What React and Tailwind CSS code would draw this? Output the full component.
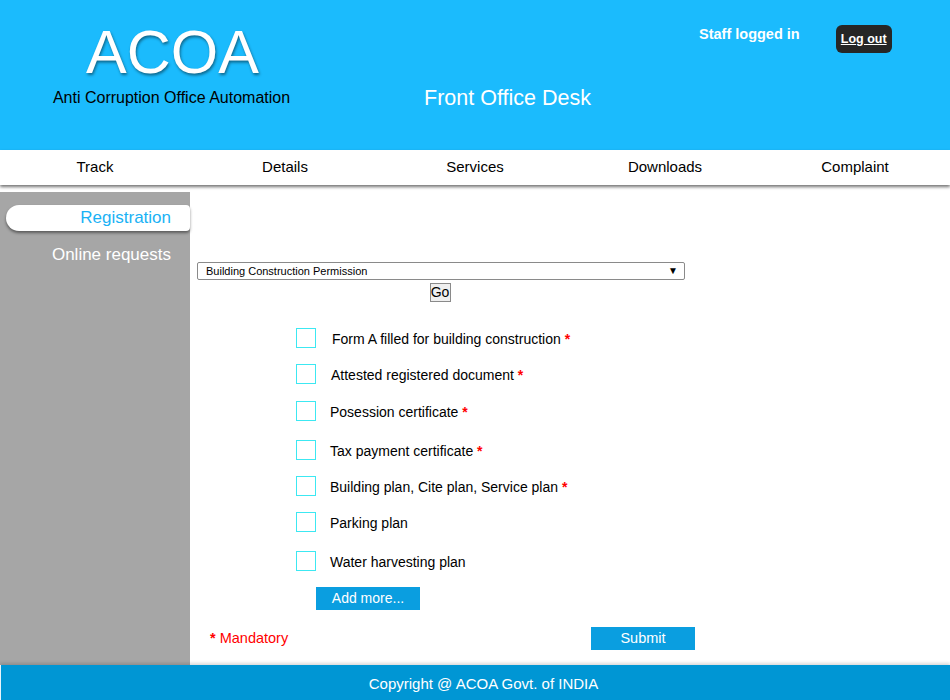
const NAV = ["Track", "Details", "Services", "Downloads", "Complaint"];

const DOCS = [
  { label: "Form A filled for building construction", req: true, top: "mt-[26px]", pl: "pl-[16px]" },
  { label: "Attested registered document", req: true, top: "mt-[16px]", pl: "pl-[15px]" },
  { label: "Posession certificate", req: true, top: "mt-[17px]", pl: "pl-[14px]" },
  { label: "Tax payment certificate", req: true, top: "mt-[19px]", pl: "pl-[14px]" },
  { label: "Building plan, Cite plan, Service plan", req: true, top: "mt-[16px]", pl: "pl-[14px]" },
  { label: "Parking plan", req: false, top: "mt-[16px]", pl: "pl-[14px]" },
  { label: "Water harvesting plan", req: false, top: "mt-[19px]", pl: "pl-[14px]" },
];

const App = () => {
  return (
    <div className="w-[950px] h-[700px] bg-white overflow-hidden font-['Liberation_Sans',Arial,sans-serif]">
      {/* Header */}
      <div className="h-[150px] bg-[#1bbbfd] flex">
        <div className="w-[345px] flex flex-col items-center pt-[17px]">
          <div className="text-white text-[61px] leading-[70px] [text-shadow:1px_2px_3px_rgba(0,0,0,0.45)]">
            ACOA
          </div>
          <div className="text-black text-[16px] leading-[20px] mt-[1px] ml-[-2px]">
            Anti Corruption Office Automation
          </div>
        </div>
        <div className="w-[325px] flex justify-center pt-[85px]">
          <div className="text-white text-[21.5px] leading-[26px]">Front Office Desk</div>
        </div>
        <div className="flex-1 flex items-start pt-[25px]">
          <div className="text-white text-[14.5px] font-bold leading-[20px] mt-[-1px] ml-[29px]">
            Staff logged in
          </div>
          <button className="ml-[36px] h-[28px] w-[56px] rounded-[6px] bg-[#262626] text-white text-[12.5px] font-bold underline leading-[28px] text-center">
            Log out
          </button>
        </div>
      </div>

      {/* Nav */}
      <div className="h-[35px] bg-white grid grid-cols-5 shadow-[0_2px_3px_rgba(0,0,0,0.55)] relative">
        {NAV.map((n) => (
          <div key={n} className="text-center text-[15px] leading-[33px] text-black">
            {n}
          </div>
        ))}
      </div>

      {/* Body */}
      <div className="flex mt-[7px] h-[473px]">
        <div className="w-[190px] bg-[#a6a6a6] pt-[13px]">
          <div className="ml-[6px] h-[26px] bg-white rounded-l-[13px] rounded-r-[4px] shadow-[0_2px_3px_rgba(0,0,0,0.45)] flex items-center justify-end pr-[19px]">
            <span className="text-[#1ab2f5] text-[17px] leading-[26px]">Registration</span>
          </div>
          <div className="mt-[13px] text-right pr-[19px] text-white text-[17px] leading-[22px]">
            Online requests
          </div>
        </div>

        <div className="flex-1 pl-[7px] pt-[70px] relative">
          <div className="w-[488px] h-[18px] border border-[#8a8a8a] rounded-[2px] bg-white flex items-center justify-between pl-[8px] pr-[6px]">
            <span className="text-[11px] text-black leading-[14px]">Building Construction Permission</span>
            <span className="text-[10px] text-black leading-[14px]">▼</span>
          </div>
          <div className="w-[488px] flex justify-center mt-[3px]">
            <button className="h-[19px] w-[21px] border border-[#8a8a8a] bg-[#efefef] text-[14px] leading-[17px] text-black text-center ml-[-2px]">
              Go
            </button>
          </div>

          <div className="pl-[99px]">
            {DOCS.map((d) => (
              <div key={d.label} className={`flex items-center h-[20px] ${d.top}`}>
                <div className="w-[20px] h-[20px] border-[1.5px] border-[#3ce8f2] shrink-0"></div>
                <div className={`${d.pl} text-[14px] text-black leading-[20px] relative top-[1px]`}>
                  {d.label}
                  {d.req && <span className="text-[#ff0000] font-bold"> *</span>}
                </div>
              </div>
            ))}
          </div>

          <div className="pl-[119px] mt-[15px]">
            <button className="w-[104px] h-[23px] bg-[#0a9ee0] text-white text-[14px] leading-[23px] text-center">
              Add more...
            </button>
          </div>

          <div className="flex items-center mt-[17px]">
            <div className="pl-[13px] text-[#ff0000] text-[14.5px] leading-[20px] w-[394px] relative top-[-1px]">
              <span className="font-bold">*</span> Mandatory
            </div>
            <button className="w-[104px] h-[23px] bg-[#0a9ee0] text-white text-[14.5px] leading-[23px] text-center">
              Submit
            </button>
          </div>
        </div>
      </div>

      {/* Footer */}
      <div className="h-[35px] bg-[#0096d4] border-l border-[#e8f4fa] shadow-[0_-2px_3px_rgba(0,0,0,0.15)] relative text-center pl-[16px] text-white text-[15px] leading-[37px]">
        Copyright @ ACOA Govt. of INDIA
      </div>
    </div>
  );
};

export default App;
